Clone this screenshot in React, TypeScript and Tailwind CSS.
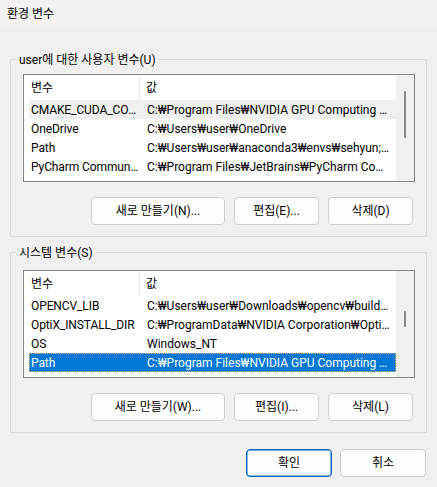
import React from "react";

type Row = { name: string; value: string; state?: "hover" | "selected" };

const userVars: Row[] = [
  { name: "CMAKE_CUDA_COMPILER", value: "C:₩Program Files₩NVIDIA GPU Computing Toolkit₩CUDA₩v11.8₩bin₩nvcc.exe", state: "hover" },
  { name: "OneDrive", value: "C:₩Users₩user₩OneDrive" },
  { name: "Path", value: "C:₩Users₩user₩anaconda3₩envs₩sehyun;C:₩Users₩user₩anaconda3" },
  { name: "PyCharm Community Edition", value: "C:₩Program Files₩JetBrains₩PyCharm Community Edition 2023.1₩bin;" },
];

const systemVars: Row[] = [
  { name: "OPENCV_LIB", value: "C:₩Users₩user₩Downloads₩opencv₩build₩x64₩vc16₩lib" },
  { name: "OptiX_INSTALL_DIR", value: "C:₩ProgramData₩NVIDIA Corporation₩OptiX SDK 7.6.0" },
  { name: "OS", value: "Windows_NT" },
  { name: "Path", value: "C:₩Program Files₩NVIDIA GPU Computing Toolkit₩CUDA₩v11.8₩bin", state: "selected" },
];

function VarList({ rows, thumbTop, thumbHeight }: { rows: Row[]; thumbTop: number; thumbHeight: number }) {
  return (
    <div className="flex h-[108px] border border-[#868686] bg-white">
      <div className="flex min-w-0 flex-1 flex-col overflow-hidden">
        {/* header */}
        <div className="flex h-[25px] shrink-0 items-center pt-[1px]">
          <div className="flex h-full w-[116px] items-center border-r border-[#e5e5e5] pl-[7px]">변수</div>
          <div className="pl-[6px]">값</div>
        </div>
        {rows.map((r, i) => (
          <div
            key={i}
            className={
              r.state === "selected"
                ? "ml-[5px] flex h-[19px] shrink-0 items-center pt-[1px] bg-[#0078d7] text-white outline outline-1 -outline-offset-1 outline-dotted outline-[#f7b36b]"
                : r.state === "hover"
                  ? "ml-[5px] flex h-[19px] shrink-0 items-center pt-[1px] bg-[#f0f0f0]"
                  : "ml-[5px] flex h-[19px] shrink-0 items-center pt-[1px]"
            }
          >
            <div className="w-[111px] shrink-0 truncate pl-[2px] pr-[1px] tracking-[-0.1px]">{r.name}</div>
            <div className="min-w-0 flex-1 truncate pl-[7px] pr-[5px]">{r.value}</div>
          </div>
        ))}
      </div>
      {/* scrollbar */}
      <div className="w-[18px] shrink-0 bg-[#f0f0f0] pl-[8px]">
        <div className="w-[2px] rounded-full bg-[#8a8a8a]" style={{ marginTop: thumbTop, height: thumbHeight }} />
      </div>
    </div>
  );
}

function Btn({ children, w, primary }: { children: React.ReactNode; w: string; primary?: boolean }) {
  return (
    <button
      className={
        primary
          ? `flex h-[28px] items-center justify-center rounded-[4px] border border-[#0067c0] bg-[#fdfdfd] shadow-[inset_0_0_0_0.5px_#0067c0] ${w}`
          : `flex h-[28px] items-center justify-center rounded-[4px] border border-[#d0d0d0] bg-[#fdfdfd] ${w}`
      }
    >
      {children}
    </button>
  );
}

function Group({ label, children }: { label: string; children: React.ReactNode }) {
  return (
    <div className="relative border border-[#dcdcdc] pl-[12px] pr-[11px]">
      <span className="absolute -top-[9px] left-[6px] bg-[#f0f0f0] px-[2px] leading-[18px]">{label}</span>
      {children}
    </div>
  );
}

export default function App() {
  return (
    <div className="h-[487px] w-[437px] overflow-hidden bg-[#f0f0f0] font-['Roboto','Noto_Sans_CJK_KR',sans-serif] text-[12px] leading-[16px] text-black">
      <div className="flex h-[28px] items-center bg-[#f3f2f1] pl-[7px]">환경 변수</div>

      <div className="px-[10px] pt-[31px]">
        <Group label="user에 대한 사용자 변수(U)">
          <div className="pt-[14px]">
            <VarList rows={userVars} thumbTop={16} thumbHeight={47} />
          </div>
          <div className="mt-[15px] flex justify-end gap-[9px] pb-[11px] pr-[2px]">
            <Btn w="w-[134px]">새로 만들기(N)...</Btn>
            <Btn w="w-[85px]">편집(E)...</Btn>
            <Btn w="w-[85px]">삭제(D)</Btn>
          </div>
        </Group>

        <div className="mt-[15px]">
          <Group label="시스템 변수(S)">
            <div className="pt-[17px]">
              <VarList rows={systemVars} thumbTop={40} thumbHeight={16} />
            </div>
            <div className="mt-[15px] flex justify-end gap-[9px] pb-[11px] pr-[2px]">
              <Btn w="w-[134px]">새로 만들기(W)...</Btn>
              <Btn w="w-[85px]">편집(I)...</Btn>
              <Btn w="w-[85px]">삭제(L)</Btn>
            </div>
          </Group>
        </div>

        <div className="mt-[16px] flex justify-end gap-[8px] pr-[1px]">
          <Btn w="w-[86px]" primary>
            확인
          </Btn>
          <Btn w="w-[86px]">취소</Btn>
        </div>
      </div>
    </div>
  );
}
